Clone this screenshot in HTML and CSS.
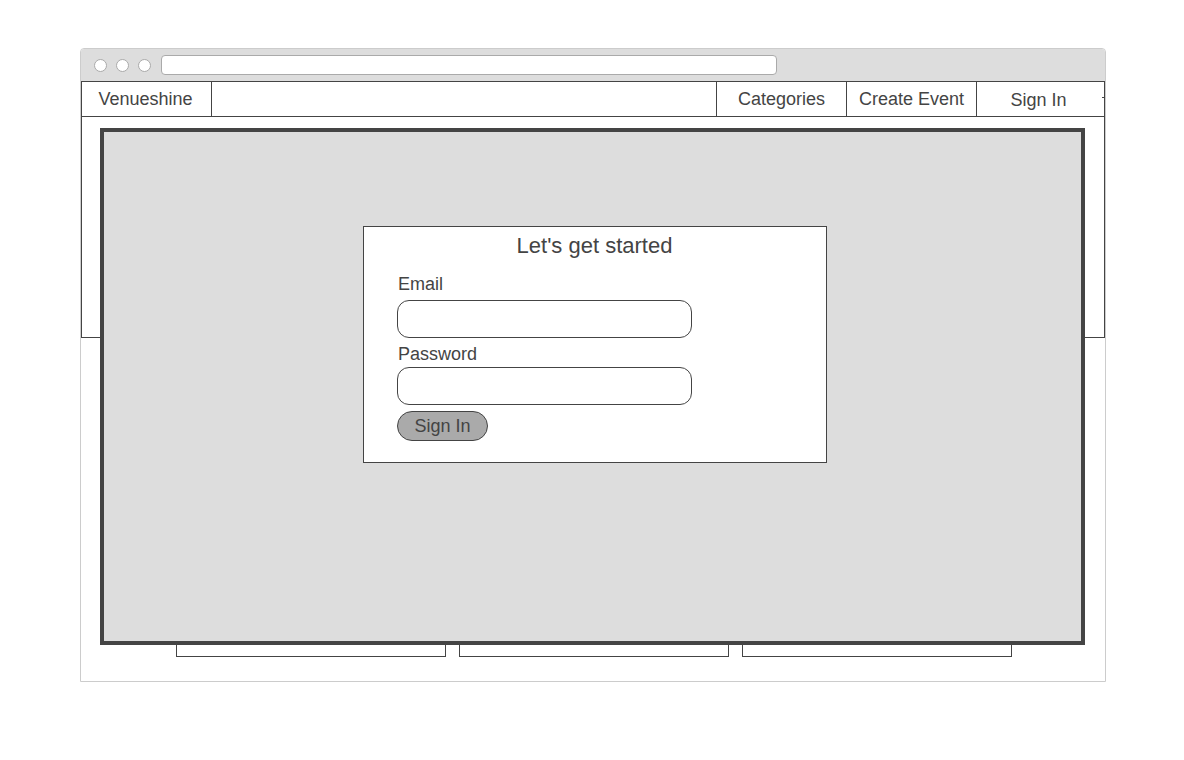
FILE: index.html
```html
<!DOCTYPE html>
<html lang="en">
<head>
<meta charset="utf-8">
<title>Venueshine</title>
<link rel="stylesheet" href="styles.css">
</head>
<body>
<div class="window">
  <div class="titlebar">
    <span class="dot"></span>
    <span class="dot"></span>
    <span class="dot"></span>
    <div class="address"></div>
  </div>
  <div class="hero">
    <nav class="nav">
      <div class="cell brand">Venueshine</div>
      <div class="cell spacer"></div>
      <div class="cell">Categories</div>
      <div class="cell">Create Event</div>
      <div class="cell signin">Sign In</div>
    </nav>
  </div>
  <div class="cards">
    <div class="card"></div>
    <div class="card"></div>
    <div class="card"></div>
  </div>
  <div class="overlay">
    <div class="dialog">
      <div class="dialog-title">Let's get started</div>
      <form class="form">
        <label class="label label-email">Email</label>
        <div class="input input-email"></div>
        <label class="label label-password">Password</label>
        <div class="input input-password"></div>
        <div class="button">Sign In</div>
      </form>
    </div>
  </div>
</div>
</body>
</html>
```
FILE: styles.css
```css
html, body {
  margin: 0;
  padding: 0;
  background: #ffffff;
}

body {
  font-family: "Liberation Sans", Arial, sans-serif;
  color: #444444;
}

.window {
  position: relative;
  box-sizing: border-box;
  width: 1026px;
  height: 634px;
  margin: 48px 0 0 80px;
  border: 1px solid #cccccc;
  border-radius: 4px 4px 0 0;
  background: #ffffff;
}

.titlebar {
  display: flex;
  align-items: center;
  height: 32px;
  padding-left: 13px;
  background: #dddddd;
  border-radius: 3px 3px 0 0;
}

.dot {
  box-sizing: border-box;
  width: 13px;
  height: 13px;
  margin-right: 9px;
  border: 1px solid #aaaaaa;
  border-radius: 50%;
  background: #ffffff;
}

.dot:nth-child(3) {
  margin-right: 10px;
}

.address {
  box-sizing: border-box;
  width: 616px;
  height: 20px;
  margin-top: -1px;
  border: 1px solid #aaaaaa;
  border-radius: 4px;
  background: #ffffff;
}

.hero {
  box-sizing: border-box;
  height: 257px;
  border: 1px solid #444444;
}

.nav {
  display: flex;
  height: 35px;
  border-bottom: 1px solid #444444;
  box-sizing: border-box;
}

.cell {
  position: relative;
  box-sizing: border-box;
  width: 130px;
  height: 34px;
  padding-top: 1px;
  line-height: 32px;
  font-size: 18px;
  text-align: center;
  border-right: 1px solid #444444;
  white-space: nowrap;
}

.brand {
  padding-right: 2px;
}

.spacer {
  width: 505px;
}

.signin {
  width: 127px;
  padding-top: 2px;
  padding-right: 4px;
  border-right: none;
}

.signin::after {
  content: "";
  position: absolute;
  right: 0;
  top: 15px;
  width: 2px;
  height: 1px;
  background: #444444;
}

.cards {
  display: flex;
  gap: 13px;
  margin: 20px 0 0 95px;
}

.card {
  box-sizing: border-box;
  width: 270px;
  height: 299px;
  border: 1px solid #444444;
}

.overlay {
  position: absolute;
  left: 19px;
  top: 79px;
  box-sizing: border-box;
  width: 985px;
  height: 517px;
  border: 4px solid #444444;
  background: #dddddd;
  padding: 94px 0 0 259px;
}

.dialog {
  box-sizing: border-box;
  width: 464px;
  height: 237px;
  border: 1px solid #444444;
  background: #ffffff;
  padding-top: 6px;
}

.dialog-title {
  font-size: 22px;
  line-height: 26px;
  text-align: center;
  padding-right: 1px;
}

.form {
  display: flex;
  flex-direction: column;
  align-items: flex-start;
  margin: 0;
  padding-left: 33px;
}

.label {
  font-size: 18px;
  line-height: 20px;
  padding-left: 1px;
}

.label-email {
  margin-top: 15px;
}

.label-password {
  margin-top: 6px;
}

.input {
  box-sizing: border-box;
  width: 295px;
  height: 38px;
  border: 1px solid #444444;
  border-radius: 12px;
  background: #ffffff;
}

.input-email {
  margin-top: 6px;
}

.input-password {
  margin-top: 3px;
}

.button {
  box-sizing: border-box;
  width: 91px;
  height: 30px;
  margin-top: 6px;
  border: 1px solid #444444;
  border-radius: 15px;
  background: #aaaaaa;
  font-size: 18px;
  line-height: 28px;
  text-align: center;
}
```
